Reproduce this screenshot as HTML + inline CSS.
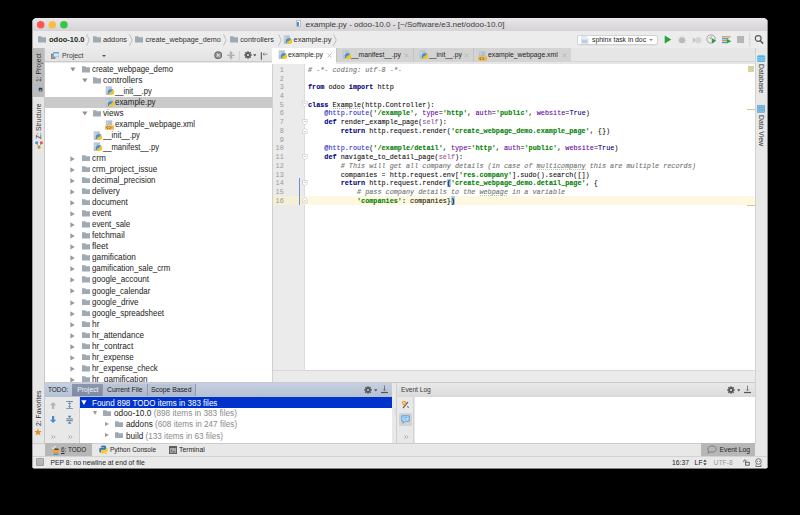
<!DOCTYPE html><html><head><meta charset="utf-8"><style>
*{margin:0;padding:0;box-sizing:border-box}
html,body{width:800px;height:515px;background:#000;overflow:hidden}
body{font-family:"Liberation Sans",sans-serif;font-size:6.8px;color:#262626;position:relative}
.a{position:absolute}
.clip{position:absolute;left:0;top:0;width:800px;height:515px;clip-path:inset(18px 32px 46px 32px round 5px 5px 4px 4px)}
.t{position:absolute;white-space:pre;line-height:10px}
.mono{font-family:"Liberation Mono",monospace}
.code{-webkit-text-stroke:0.1px currentColor}
.dot{position:absolute;width:7.6px;height:7.6px;border-radius:50%}
.fold{position:absolute;width:8px;height:5.6px;background:#9eaab4;border-radius:0.5px}
.fold:before{content:"";position:absolute;left:0;top:-1.2px;width:3.5px;height:1.6px;background:#9eaab4;border-radius:0.5px 0.5px 0 0}
.tri{position:absolute;width:0;height:0}
.tri.d{border-left:2.6px solid transparent;border-right:2.6px solid transparent;border-top:4px solid #8e8e8e}
.tri.r{border-top:2.6px solid transparent;border-bottom:2.6px solid transparent;border-left:4px solid #8e8e8e}
</style></head><body>
<div class="clip">
<div class="a" style="left:32px;top:18px;width:736px;height:451px;background:#e9e9e9"></div>
<div class="a" style="left:32px;top:18px;width:736px;height:13px;background:linear-gradient(#e8e6e8,#d5d3d5)"></div>
<div class="a" style="left:32px;top:30.6px;width:736px;height:0.8px;background:#b4b4b4"></div>
<svg class="a" style="left:32px;top:18px" width="40" height="13" viewBox="32 18 40 13"><circle cx="40.70" cy="24.8" r="3.75" fill="#fc5753"/><circle cx="52.30" cy="24.8" r="3.75" fill="#fdbc40"/><circle cx="63.90" cy="24.8" r="3.75" fill="#33c748"/></svg>
<div class="a" style="left:296px;top:20px;width:4.5px;height:7px;background:#fff;border:0.5px solid #bbb"></div>
<div class="a" style="left:297.3px;top:22px;width:1.6px;height:3.5px;background:#3b8fd6"></div>
<div class="t" style="left:305.5px;top:19.6px;font-size:8.1px;color:#3c3c3c">example.py - odoo-10.0 - [~/Software/e3.net/odoo-10.0]</div>
<div class="a" style="left:32px;top:31.4px;width:736px;height:16.6px;background:#ececec"></div>
<div class="a" style="left:32px;top:47.6px;width:736px;height:0.8px;background:#cdcdcd"></div>
<svg class="a" style="left:38.0px;top:36.3px" width="8.2" height="6.6" viewBox="0 0 8.2 6.6"><path d="M0 0.2h3.3l0.6 1h4.3v5.3h-8.2z" fill="#9eaab4"/></svg>
<div class="t" style="left:49px;top:34.6px;font-size:7.5px;font-weight:bold;color:#262626">odoo-10.0</div>
<svg class="a" style="left:86.1px;top:34px" width="4" height="12" viewBox="0 0 4 12"><path d="M0.5 0.4 L3.3 6 L0.5 11.6" fill="none" stroke="#a0a0a0" stroke-width="0.6"/></svg>
<svg class="a" style="left:93.0px;top:36.3px" width="8.2" height="6.6" viewBox="0 0 8.2 6.6"><path d="M0 0.2h3.3l0.6 1h4.3v5.3h-8.2z" fill="#9eaab4"/></svg>
<div class="t" style="left:103px;top:34.6px;font-size:7.3px;color:#303030">addons</div>
<svg class="a" style="left:129.1px;top:34px" width="4" height="12" viewBox="0 0 4 12"><path d="M0.5 0.4 L3.3 6 L0.5 11.6" fill="none" stroke="#a0a0a0" stroke-width="0.6"/></svg>
<svg class="a" style="left:135.0px;top:36.3px" width="8.2" height="6.6" viewBox="0 0 8.2 6.6"><path d="M0 0.2h3.3l0.6 1h4.3v5.3h-8.2z" fill="#9eaab4"/></svg>
<div class="t" style="left:145.6px;top:34.6px;font-size:7.2px;color:#303030">create_webpage_demo</div>
<svg class="a" style="left:222.6px;top:34px" width="4" height="12" viewBox="0 0 4 12"><path d="M0.5 0.4 L3.3 6 L0.5 11.6" fill="none" stroke="#a0a0a0" stroke-width="0.6"/></svg>
<svg class="a" style="left:229.8px;top:36.3px" width="8.2" height="6.6" viewBox="0 0 8.2 6.6"><path d="M0 0.2h3.3l0.6 1h4.3v5.3h-8.2z" fill="#9eaab4"/></svg>
<div class="t" style="left:240.2px;top:34.6px;font-size:7.3px;color:#303030">controllers</div>
<svg class="a" style="left:277.6px;top:34px" width="4" height="12" viewBox="0 0 4 12"><path d="M0.5 0.4 L3.3 6 L0.5 11.6" fill="none" stroke="#a0a0a0" stroke-width="0.6"/></svg>
<svg class="a" style="left:283.0px;top:34.8px" width="10.0" height="10.0" viewBox="0 0 10 10"><rect x="0.7" y="0.4" width="6.1" height="8.6" fill="#b5c1cc"/><path d="M1.4 2h2.4M1.4 3.4h1.6M1.4 4.8h1" stroke="#e6ebf0" stroke-width="0.6"/><g transform="translate(2.8 3.1) scale(0.93)"><path d="M0.2 3.2Q0.2 0.2 3.2 0.2H5.6V2.9H3.4Q2.8 2.9 2.8 3.5V5.4H0.2z" fill="#3d8fd6"/><path d="M6.8 3.4Q6.8 6.4 3.8 6.4H1.4V3.7H3.6Q4.2 3.7 4.2 3.1V1.2H6.8z" fill="#f6c41c"/></g></svg>
<div class="t" style="left:293.6px;top:34.6px;font-size:7.4px;color:#303030">example.py</div>
<svg class="a" style="left:333.1px;top:34px" width="4" height="12" viewBox="0 0 4 12"><path d="M0.5 0.4 L3.3 6 L0.5 11.6" fill="none" stroke="#a0a0a0" stroke-width="0.6"/></svg>
<div class="a" style="left:576.8px;top:34.6px;width:81px;height:10.4px;background:#fff;border:0.6px solid #d2d2d2;border-radius:2px;box-shadow:0 0.6px 0.6px rgba(0,0,0,.08)"></div>
<svg class="a" style="left:581.3px;top:35.8px" width="7.5" height="8" viewBox="0 0 7.5 8"><path d="M0.3 0.3h4.6l2.3 2.3v5.1h-6.9z" fill="#e8eef4" stroke="#c9d2db" stroke-width="0.5"/><rect x="0.8" y="3.6" width="5.6" height="3.4" fill="#b8d0e6"/></svg>
<div class="t" style="left:592px;top:35.2px;font-size:6.8px;color:#262626">sphinx task in doc</div>
<div class="tri d" style="left:649px;top:38.8px;border-top-color:#8a8a8a;border-left-width:2.3px;border-right-width:2.3px;border-top-width:2.8px"></div>
<svg class="a" style="left:664px;top:35px" width="8" height="9" viewBox="0 0 8 9"><path d="M0.7 0.5L7.3 4.5L0.7 8.5z" fill="#27a33c"/></svg>
<svg class="a" style="left:677px;top:34.5px" width="10" height="10" viewBox="0 0 10 10"><circle cx="5" cy="5.2" r="3" fill="#b9b9b9"/><path d="M1 3l1.5 1M9 3l-1.5 1M0.7 5.5h1.5M9.3 5.5h-1.5M1 8l1.5-1M9 8l-1.5-1M3.5 1.2l0.7 1.2M6.5 1.2l-0.7 1.2" stroke="#c4c4c4" stroke-width="0.6"/></svg>
<svg class="a" style="left:692px;top:34.5px" width="10" height="10" viewBox="0 0 10 10"><path d="M0.8 2.5L5 5.2L0.8 8z" fill="#c6c6c6"/><circle cx="6.3" cy="5.2" r="3.1" fill="#d4d4d4"/></svg>
<svg class="a" style="left:706px;top:34.3px" width="11" height="10" viewBox="0 0 11 10"><circle cx="5" cy="5" r="4.1" fill="none" stroke="#8a8a8a" stroke-width="0.7"/><path d="M3.2 3.5l2 1.5M5.2 2v3" stroke="#888" stroke-width="0.6"/><path d="M5.8 4.2L10.2 6.8L5.8 9.4z" fill="#27a33c"/></svg>
<svg class="a" style="left:721.5px;top:35.6px" width="10" height="8" viewBox="0 0 10 8"><rect x="0" y="0.2" width="8.5" height="1.3" fill="#c99a5c"/><rect x="0" y="2.1" width="6.5" height="1.3" fill="#5d94c8"/><rect x="0" y="4.0" width="5" height="1.3" fill="#c99a5c"/><rect x="0" y="5.9" width="5" height="1.3" fill="#5d94c8"/><path d="M4.8 3L9.4 5.3L4.8 7.6z" fill="#27a33c"/></svg>
<div class="a" style="left:737.2px;top:36.1px;width:6.5px;height:6.6px;background:#b6b6b6"></div>
<svg class="a" style="left:749.2px;top:33px" width="1.6" height="14" viewBox="0 0 1.6 14"><path d="M0.8 0.3V13.7" stroke="#a8a8a8" stroke-width="0.8" stroke-dasharray="0.9 1.1"/></svg>
<svg class="a" style="left:753.6px;top:34.4px" width="10" height="10" viewBox="0 0 10 10"><circle cx="4.2" cy="4.5" r="2.9" fill="none" stroke="#5a5a5a" stroke-width="1.15"/><path d="M6.3 6.7L8.7 9.1" stroke="#5a5a5a" stroke-width="1.5" stroke-linecap="round"/></svg>
<div class="a" style="left:32px;top:48.4px;width:12.5px;height:394.5px;background:#e6e6e6;border-right:0.6px solid #c8c8c8"></div>
<div class="a" style="left:32.7px;top:48.4px;width:11.4px;height:49.1px;background:#bcbcbc"></div>
<div class="t" style="left:33.6px;top:82.2px;font-size:6.8px;color:#2c2c2c;transform-origin:0 0;transform:rotate(-90deg)">1: Project</div>
<svg class="a" style="left:35.2px;top:84.4px" width="7.5" height="7.5" viewBox="0 0 7.5 7.5"><path d="M0.2 0.3h2.6l0.5 0.9h3.3v4.3h-6.4z" fill="#a9bccd"/><rect x="3.8" y="3.8" width="3.5" height="3.5" fill="#333"/><rect x="4.6" y="5.6" width="1.9" height="1" fill="#ddd"/></svg>
<div class="t" style="left:33.5px;top:138.5px;font-size:6.8px;color:#2c2c2c;transform-origin:0 0;transform:rotate(-90deg)">Z: Structure</div>
<svg class="a" style="left:34.6px;top:140.8px" width="8" height="8" viewBox="0 0 8 8"><path d="M1.6 1.8L4 5.8L6.4 1.8" stroke="#777" stroke-width="0.7" fill="none"/><circle cx="1.6" cy="1.8" r="1.5" fill="#4a90d9"/><circle cx="6.4" cy="1.8" r="1.5" fill="#e05252"/><circle cx="4" cy="6.2" r="1.5" fill="#d9902a"/><circle cx="4" cy="3.6" r="0.8" fill="#fff"/></svg>
<div class="t" style="left:33.6px;top:426.0px;font-size:6.8px;color:#2c2c2c;transform-origin:0 0;transform:rotate(-90deg)">2: Favorites</div>
<svg class="a" style="left:34px;top:428px" width="8" height="8" viewBox="0 0 10 10"><path d="M5 0.3L6.3 3.6L9.8 3.8L7.1 6L8 9.5L5 7.5L2 9.5L2.9 6L0.2 3.8L3.7 3.6z" fill="#e0902a"/></svg>
<div class="a" style="left:755px;top:48.4px;width:13px;height:408px;background:#e8e8e8;border-left:0.6px solid #d2d2d2"></div>
<svg class="a" style="left:757.3px;top:54.8px" width="8.4" height="7.4" viewBox="0 0 8.4 7.4"><rect x="0.2" y="0.2" width="8" height="7" rx="2.2" ry="1.4" fill="#55b4e6"/><path d="M0.4 2.6q3.8 1 7.6 0M0.4 4.8q3.8 1 7.6 0" stroke="#bfe3f6" stroke-width="0.6" fill="none"/></svg>
<div class="t" style="left:766.0px;top:64.0px;font-size:6.8px;color:#2c2c2c;transform-origin:0 0;transform:rotate(90deg)">Database</div>
<svg class="a" style="left:757px;top:105.2px" width="8" height="7.6" viewBox="0 0 8 7.6"><rect x="0.3" y="0.3" width="7.4" height="7" fill="#86c4ec" stroke="#5d9dcc" stroke-width="0.6"/><path d="M0.3 2.6h7.4M0.3 4.9h7.4M2.8 0.3v7M5.2 0.3v7" stroke="#5d9dcc" stroke-width="0.5"/></svg>
<div class="t" style="left:766.0px;top:115.0px;font-size:6.8px;color:#2c2c2c;transform-origin:0 0;transform:rotate(90deg)">Data View</div>
<div class="a" style="left:44.6px;top:48.4px;width:227.4px;height:14px;background:linear-gradient(#ebebeb,#e3e3e3);border-bottom:0.7px solid #cacaca"></div>
<div class="a" style="left:44.6px;top:62.5px;width:227.4px;height:320.5px;background:#fff"></div>
<svg class="a" style="left:50.8px;top:51.6px" width="8.2" height="7.2" viewBox="0 0 8.2 7.2"><rect x="0.4" y="2" width="3.6" height="5" fill="#9a9a9a" stroke="#666" stroke-width="0.6"/><rect x="2.6" y="0.3" width="5.4" height="4.6" fill="#d6e8f6" stroke="#6d9ecb" stroke-width="0.5"/><rect x="2.6" y="0.3" width="5.4" height="1.1" fill="#5b9bd5"/></svg>
<div class="t" style="left:62px;top:51.2px;font-size:6.9px;color:#3a3a3a">Project</div>
<div class="tri d" style="left:101.8px;top:54.8px;border-top-color:#555;border-left-width:2.2px;border-right-width:2.2px;border-top-width:2.6px"></div>
<svg class="a" style="left:214px;top:51.3px" width="8.4" height="8.4" viewBox="0 0 8.4 8.4"><circle cx="4.2" cy="4.2" r="3.9" fill="#6f6f6f"/><circle cx="4.2" cy="4.2" r="2.7" fill="#9a9a9a"/><path d="M2.8 2.8l2.8 2.8M5.6 2.8l-2.8 2.8" stroke="#f0f0f0" stroke-width="0.9"/></svg>
<svg class="a" style="left:226.5px;top:51px" width="8" height="8.5" viewBox="0 0 8 8.5"><path d="M0.3 4.25h7.4" stroke="#8c8c8c" stroke-width="0.8"/><path d="M4 0.2v2.6M4 8.3v-2.6" stroke="#8c8c8c" stroke-width="0.9"/><path d="M2.6 1.8L4 3.4L5.4 1.8M2.6 6.7L4 5.1L5.4 6.7" fill="none" stroke="#8c8c8c" stroke-width="0.8"/></svg>
<div class="a" style="left:239.3px;top:51px;width:0.6px;height:9px;background:#d0d0d0"></div>
<svg class="a" style="left:244.0px;top:51.3px" width="8" height="8" viewBox="0 0 8 8"><g fill="#5a5a5a"><rect x="3.3" y="0.2" width="1.4" height="7.6"/><rect x="0.2" y="3.3" width="7.6" height="1.4"/><rect x="3.3" y="0.2" width="1.4" height="7.6" transform="rotate(45 4 4)"/><rect x="3.3" y="0.2" width="1.4" height="7.6" transform="rotate(-45 4 4)"/><circle cx="4" cy="4" r="2.7"/></g><circle cx="4" cy="4" r="1.1" fill="#e8e8e8"/></svg>
<svg class="a" style="left:252.6px;top:54.4px" width="3.6" height="2.8" viewBox="0 0 3.6 2.8"><path d="M0 0.2H3.6L1.8 2.6z" fill="#555"/></svg>
<svg class="a" style="left:260px;top:51.5px" width="8" height="8" viewBox="0 0 8 8"><path d="M1.4 0.3v7.4" stroke="#6a6a6a" stroke-width="1.3"/><path d="M3 2.2h4.6M3 2.2l1.4-1.2M3 2.2l1.4 1.2" stroke="#6a6a6a" stroke-width="0.7" fill="none"/></svg>
<div class="a" style="left:44.6px;top:97px;width:227.4px;height:10.8px;background:#cacaca"></div>
<svg class="a" style="left:69.9px;top:67.0px" width="6" height="5" viewBox="0 0 6 5"><path d="M0.3 0.4H5.5L2.9 4.6z" fill="#8f8f8f"/></svg>
<svg class="a" style="left:81.5px;top:66.0px" width="8.2" height="6.6" viewBox="0 0 8.2 6.6"><path d="M0 0.2h3.3l0.6 1h4.3v5.3h-8.2z" fill="#9eaab4"/></svg>
<div class="t" style="left:91.7px;top:65.0px;font-size:8.2px;color:#222;transform-origin:0 50%;transform:scaleX(0.9466)">create_webpage_demo</div>
<svg class="a" style="left:81.6px;top:78.1px" width="6" height="5" viewBox="0 0 6 5"><path d="M0.3 0.4H5.5L2.9 4.6z" fill="#8f8f8f"/></svg>
<svg class="a" style="left:93.2px;top:77.1px" width="8.2" height="6.6" viewBox="0 0 8.2 6.6"><path d="M0 0.2h3.3l0.6 1h4.3v5.3h-8.2z" fill="#9eaab4"/></svg>
<div class="t" style="left:103.4px;top:76.1px;font-size:8.2px;color:#222;transform-origin:0 50%;transform:scaleX(1.0453)">controllers</div>
<svg class="a" style="left:104.8px;top:86.4px" width="10.0" height="10.0" viewBox="0 0 10 10"><rect x="0.7" y="0.4" width="6.1" height="8.6" fill="#b5c1cc"/><path d="M1.4 2h2.4M1.4 3.4h1.6M1.4 4.8h1" stroke="#e6ebf0" stroke-width="0.6"/><g transform="translate(2.8 3.1) scale(0.93)"><path d="M0.2 3.2Q0.2 0.2 3.2 0.2H5.6V2.9H3.4Q2.8 2.9 2.8 3.5V5.4H0.2z" fill="#3d8fd6"/><path d="M6.8 3.4Q6.8 6.4 3.8 6.4H1.4V3.7H3.6Q4.2 3.7 4.2 3.1V1.2H6.8z" fill="#f6c41c"/></g></svg>
<div class="t" style="left:115.1px;top:87.1px;font-size:8.2px;color:#222;transform-origin:0 50%;transform:scaleX(0.9272)">__init__.py</div>
<svg class="a" style="left:104.8px;top:97.5px" width="10.0" height="10.0" viewBox="0 0 10 10"><rect x="0.7" y="0.4" width="6.1" height="8.6" fill="#b5c1cc"/><path d="M1.4 2h2.4M1.4 3.4h1.6M1.4 4.8h1" stroke="#e6ebf0" stroke-width="0.6"/><g transform="translate(2.8 3.1) scale(0.93)"><path d="M0.2 3.2Q0.2 0.2 3.2 0.2H5.6V2.9H3.4Q2.8 2.9 2.8 3.5V5.4H0.2z" fill="#3d8fd6"/><path d="M6.8 3.4Q6.8 6.4 3.8 6.4H1.4V3.7H3.6Q4.2 3.7 4.2 3.1V1.2H6.8z" fill="#f6c41c"/></g></svg>
<div class="t" style="left:115.1px;top:98.2px;font-size:8.2px;color:#222;transform-origin:0 50%;transform:scaleX(0.9681)">example.py</div>
<svg class="a" style="left:81.6px;top:111.3px" width="6" height="5" viewBox="0 0 6 5"><path d="M0.3 0.4H5.5L2.9 4.6z" fill="#8f8f8f"/></svg>
<svg class="a" style="left:93.2px;top:110.3px" width="8.2" height="6.6" viewBox="0 0 8.2 6.6"><path d="M0 0.2h3.3l0.6 1h4.3v5.3h-8.2z" fill="#9eaab4"/></svg>
<div class="t" style="left:103.4px;top:109.3px;font-size:8.2px;color:#222;transform-origin:0 50%;transform:scaleX(1.0066)">views</div>
<svg class="a" style="left:104.8px;top:119.7px" width="9.4" height="10" viewBox="0 0 9.4 10"><rect x="0.9" y="0.4" width="6.4" height="5" fill="#b3bfca"/><path d="M1.6 2h2.2M1.6 3.4h1.4" stroke="#e4e9ee" stroke-width="0.6"/><rect x="0.2" y="5.4" width="8.8" height="4.4" fill="#f1b74a"/><path d="M3 6.3l-1.2 1.3 1.2 1.3M4.6 6.3l1.2 1.3-1.2 1.3" fill="none" stroke="#6b4a12" stroke-width="0.8"/></svg>
<div class="t" style="left:115.1px;top:120.4px;font-size:8.2px;color:#222;transform-origin:0 50%;transform:scaleX(0.9566)">example_webpage.xml</div>
<svg class="a" style="left:93.1px;top:130.7px" width="10.0" height="10.0" viewBox="0 0 10 10"><rect x="0.7" y="0.4" width="6.1" height="8.6" fill="#b5c1cc"/><path d="M1.4 2h2.4M1.4 3.4h1.6M1.4 4.8h1" stroke="#e6ebf0" stroke-width="0.6"/><g transform="translate(2.8 3.1) scale(0.93)"><path d="M0.2 3.2Q0.2 0.2 3.2 0.2H5.6V2.9H3.4Q2.8 2.9 2.8 3.5V5.4H0.2z" fill="#3d8fd6"/><path d="M6.8 3.4Q6.8 6.4 3.8 6.4H1.4V3.7H3.6Q4.2 3.7 4.2 3.1V1.2H6.8z" fill="#f6c41c"/></g></svg>
<div class="t" style="left:103.4px;top:131.4px;font-size:8.2px;color:#222;transform-origin:0 50%;transform:scaleX(0.9322)">__init__.py</div>
<svg class="a" style="left:93.1px;top:141.8px" width="10.0" height="10.0" viewBox="0 0 10 10"><rect x="0.7" y="0.4" width="6.1" height="8.6" fill="#b5c1cc"/><path d="M1.4 2h2.4M1.4 3.4h1.6M1.4 4.8h1" stroke="#e6ebf0" stroke-width="0.6"/><g transform="translate(2.8 3.1) scale(0.93)"><path d="M0.2 3.2Q0.2 0.2 3.2 0.2H5.6V2.9H3.4Q2.8 2.9 2.8 3.5V5.4H0.2z" fill="#3d8fd6"/><path d="M6.8 3.4Q6.8 6.4 3.8 6.4H1.4V3.7H3.6Q4.2 3.7 4.2 3.1V1.2H6.8z" fill="#f6c41c"/></g></svg>
<div class="t" style="left:103.4px;top:142.5px;font-size:8.2px;color:#222;transform-origin:0 50%;transform:scaleX(0.9327)">__manifest__.py</div>
<svg class="a" style="left:70.3px;top:155.5px" width="6" height="6" viewBox="0 0 6 6"><path d="M0.4 0.3V5.5L4.7 2.9z" fill="#999"/></svg>
<svg class="a" style="left:81.5px;top:154.6px" width="8.2" height="6.6" viewBox="0 0 8.2 6.6"><path d="M0 0.2h3.3l0.6 1h4.3v5.3h-8.2z" fill="#9eaab4"/></svg>
<div class="t" style="left:91.7px;top:153.6px;font-size:8.2px;color:#222;transform-origin:0 50%;transform:scaleX(1.0102)">crm</div>
<svg class="a" style="left:70.3px;top:166.6px" width="6" height="6" viewBox="0 0 6 6"><path d="M0.4 0.3V5.5L4.7 2.9z" fill="#999"/></svg>
<svg class="a" style="left:81.5px;top:165.7px" width="8.2" height="6.6" viewBox="0 0 8.2 6.6"><path d="M0 0.2h3.3l0.6 1h4.3v5.3h-8.2z" fill="#9eaab4"/></svg>
<div class="t" style="left:91.7px;top:164.7px;font-size:8.2px;color:#222;transform-origin:0 50%;transform:scaleX(0.9815)">crm_project_issue</div>
<svg class="a" style="left:70.3px;top:177.6px" width="6" height="6" viewBox="0 0 6 6"><path d="M0.4 0.3V5.5L4.7 2.9z" fill="#999"/></svg>
<svg class="a" style="left:81.5px;top:176.7px" width="8.2" height="6.6" viewBox="0 0 8.2 6.6"><path d="M0 0.2h3.3l0.6 1h4.3v5.3h-8.2z" fill="#9eaab4"/></svg>
<div class="t" style="left:91.7px;top:175.7px;font-size:8.2px;color:#222;transform-origin:0 50%;transform:scaleX(0.9693)">decimal_precision</div>
<svg class="a" style="left:70.3px;top:188.7px" width="6" height="6" viewBox="0 0 6 6"><path d="M0.4 0.3V5.5L4.7 2.9z" fill="#999"/></svg>
<svg class="a" style="left:81.5px;top:187.8px" width="8.2" height="6.6" viewBox="0 0 8.2 6.6"><path d="M0 0.2h3.3l0.6 1h4.3v5.3h-8.2z" fill="#9eaab4"/></svg>
<div class="t" style="left:91.7px;top:186.8px;font-size:8.2px;color:#222;transform-origin:0 50%;transform:scaleX(0.9851)">delivery</div>
<svg class="a" style="left:70.3px;top:199.8px" width="6" height="6" viewBox="0 0 6 6"><path d="M0.4 0.3V5.5L4.7 2.9z" fill="#999"/></svg>
<svg class="a" style="left:81.5px;top:198.9px" width="8.2" height="6.6" viewBox="0 0 8.2 6.6"><path d="M0 0.2h3.3l0.6 1h4.3v5.3h-8.2z" fill="#9eaab4"/></svg>
<div class="t" style="left:91.7px;top:197.9px;font-size:8.2px;color:#222;transform-origin:0 50%;transform:scaleX(0.9965)">document</div>
<svg class="a" style="left:70.3px;top:210.9px" width="6" height="6" viewBox="0 0 6 6"><path d="M0.4 0.3V5.5L4.7 2.9z" fill="#999"/></svg>
<svg class="a" style="left:81.5px;top:210.0px" width="8.2" height="6.6" viewBox="0 0 8.2 6.6"><path d="M0 0.2h3.3l0.6 1h4.3v5.3h-8.2z" fill="#9eaab4"/></svg>
<div class="t" style="left:91.7px;top:209.0px;font-size:8.2px;color:#222;transform-origin:0 50%;transform:scaleX(0.9642)">event</div>
<svg class="a" style="left:70.3px;top:221.9px" width="6" height="6" viewBox="0 0 6 6"><path d="M0.4 0.3V5.5L4.7 2.9z" fill="#999"/></svg>
<svg class="a" style="left:81.5px;top:221.0px" width="8.2" height="6.6" viewBox="0 0 8.2 6.6"><path d="M0 0.2h3.3l0.6 1h4.3v5.3h-8.2z" fill="#9eaab4"/></svg>
<div class="t" style="left:91.7px;top:220.0px;font-size:8.2px;color:#222;transform-origin:0 50%;transform:scaleX(0.9634)">event_sale</div>
<svg class="a" style="left:70.3px;top:233.0px" width="6" height="6" viewBox="0 0 6 6"><path d="M0.4 0.3V5.5L4.7 2.9z" fill="#999"/></svg>
<svg class="a" style="left:81.5px;top:232.1px" width="8.2" height="6.6" viewBox="0 0 8.2 6.6"><path d="M0 0.2h3.3l0.6 1h4.3v5.3h-8.2z" fill="#9eaab4"/></svg>
<div class="t" style="left:91.7px;top:231.1px;font-size:8.2px;color:#222;transform-origin:0 50%;transform:scaleX(1.0008)">fetchmail</div>
<svg class="a" style="left:70.3px;top:244.1px" width="6" height="6" viewBox="0 0 6 6"><path d="M0.4 0.3V5.5L4.7 2.9z" fill="#999"/></svg>
<svg class="a" style="left:81.5px;top:243.2px" width="8.2" height="6.6" viewBox="0 0 8.2 6.6"><path d="M0 0.2h3.3l0.6 1h4.3v5.3h-8.2z" fill="#9eaab4"/></svg>
<div class="t" style="left:91.7px;top:242.2px;font-size:8.2px;color:#222;transform-origin:0 50%;transform:scaleX(1.0431)">fleet</div>
<svg class="a" style="left:70.3px;top:255.2px" width="6" height="6" viewBox="0 0 6 6"><path d="M0.4 0.3V5.5L4.7 2.9z" fill="#999"/></svg>
<svg class="a" style="left:81.5px;top:254.3px" width="8.2" height="6.6" viewBox="0 0 8.2 6.6"><path d="M0 0.2h3.3l0.6 1h4.3v5.3h-8.2z" fill="#9eaab4"/></svg>
<div class="t" style="left:91.7px;top:253.3px;font-size:8.2px;color:#222;transform-origin:0 50%;transform:scaleX(1.0047)">gamification</div>
<svg class="a" style="left:70.3px;top:266.2px" width="6" height="6" viewBox="0 0 6 6"><path d="M0.4 0.3V5.5L4.7 2.9z" fill="#999"/></svg>
<svg class="a" style="left:81.5px;top:265.3px" width="8.2" height="6.6" viewBox="0 0 8.2 6.6"><path d="M0 0.2h3.3l0.6 1h4.3v5.3h-8.2z" fill="#9eaab4"/></svg>
<div class="t" style="left:91.7px;top:264.3px;font-size:8.2px;color:#222;transform-origin:0 50%;transform:scaleX(0.9606)">gamification_sale_crm</div>
<svg class="a" style="left:70.3px;top:277.3px" width="6" height="6" viewBox="0 0 6 6"><path d="M0.4 0.3V5.5L4.7 2.9z" fill="#999"/></svg>
<svg class="a" style="left:81.5px;top:276.4px" width="8.2" height="6.6" viewBox="0 0 8.2 6.6"><path d="M0 0.2h3.3l0.6 1h4.3v5.3h-8.2z" fill="#9eaab4"/></svg>
<div class="t" style="left:91.7px;top:275.4px;font-size:8.2px;color:#222;transform-origin:0 50%;transform:scaleX(0.9838)">google_account</div>
<svg class="a" style="left:70.3px;top:288.4px" width="6" height="6" viewBox="0 0 6 6"><path d="M0.4 0.3V5.5L4.7 2.9z" fill="#999"/></svg>
<svg class="a" style="left:81.5px;top:287.5px" width="8.2" height="6.6" viewBox="0 0 8.2 6.6"><path d="M0 0.2h3.3l0.6 1h4.3v5.3h-8.2z" fill="#9eaab4"/></svg>
<div class="t" style="left:91.7px;top:286.5px;font-size:8.2px;color:#222;transform-origin:0 50%;transform:scaleX(0.9630)">google_calendar</div>
<svg class="a" style="left:70.3px;top:299.5px" width="6" height="6" viewBox="0 0 6 6"><path d="M0.4 0.3V5.5L4.7 2.9z" fill="#999"/></svg>
<svg class="a" style="left:81.5px;top:298.6px" width="8.2" height="6.6" viewBox="0 0 8.2 6.6"><path d="M0 0.2h3.3l0.6 1h4.3v5.3h-8.2z" fill="#9eaab4"/></svg>
<div class="t" style="left:91.7px;top:297.6px;font-size:8.2px;color:#222;transform-origin:0 50%;transform:scaleX(0.9935)">google_drive</div>
<svg class="a" style="left:70.3px;top:310.5px" width="6" height="6" viewBox="0 0 6 6"><path d="M0.4 0.3V5.5L4.7 2.9z" fill="#999"/></svg>
<svg class="a" style="left:81.5px;top:309.6px" width="8.2" height="6.6" viewBox="0 0 8.2 6.6"><path d="M0 0.2h3.3l0.6 1h4.3v5.3h-8.2z" fill="#9eaab4"/></svg>
<div class="t" style="left:91.7px;top:308.6px;font-size:8.2px;color:#222;transform-origin:0 50%;transform:scaleX(0.9710)">google_spreadsheet</div>
<svg class="a" style="left:70.3px;top:321.6px" width="6" height="6" viewBox="0 0 6 6"><path d="M0.4 0.3V5.5L4.7 2.9z" fill="#999"/></svg>
<svg class="a" style="left:81.5px;top:320.7px" width="8.2" height="6.6" viewBox="0 0 8.2 6.6"><path d="M0 0.2h3.3l0.6 1h4.3v5.3h-8.2z" fill="#9eaab4"/></svg>
<div class="t" style="left:91.7px;top:319.7px;font-size:8.2px;color:#222;transform-origin:0 50%;transform:scaleX(1.0265)">hr</div>
<svg class="a" style="left:70.3px;top:332.7px" width="6" height="6" viewBox="0 0 6 6"><path d="M0.4 0.3V5.5L4.7 2.9z" fill="#999"/></svg>
<svg class="a" style="left:81.5px;top:331.8px" width="8.2" height="6.6" viewBox="0 0 8.2 6.6"><path d="M0 0.2h3.3l0.6 1h4.3v5.3h-8.2z" fill="#9eaab4"/></svg>
<div class="t" style="left:91.7px;top:330.8px;font-size:8.2px;color:#222;transform-origin:0 50%;transform:scaleX(0.9941)">hr_attendance</div>
<svg class="a" style="left:70.3px;top:343.8px" width="6" height="6" viewBox="0 0 6 6"><path d="M0.4 0.3V5.5L4.7 2.9z" fill="#999"/></svg>
<svg class="a" style="left:81.5px;top:342.9px" width="8.2" height="6.6" viewBox="0 0 8.2 6.6"><path d="M0 0.2h3.3l0.6 1h4.3v5.3h-8.2z" fill="#9eaab4"/></svg>
<div class="t" style="left:91.7px;top:341.9px;font-size:8.2px;color:#222;transform-origin:0 50%;transform:scaleX(1.0079)">hr_contract</div>
<svg class="a" style="left:70.3px;top:354.8px" width="6" height="6" viewBox="0 0 6 6"><path d="M0.4 0.3V5.5L4.7 2.9z" fill="#999"/></svg>
<svg class="a" style="left:81.5px;top:353.9px" width="8.2" height="6.6" viewBox="0 0 8.2 6.6"><path d="M0 0.2h3.3l0.6 1h4.3v5.3h-8.2z" fill="#9eaab4"/></svg>
<div class="t" style="left:91.7px;top:352.9px;font-size:8.2px;color:#222;transform-origin:0 50%;transform:scaleX(0.9775)">hr_expense</div>
<svg class="a" style="left:70.3px;top:365.9px" width="6" height="6" viewBox="0 0 6 6"><path d="M0.4 0.3V5.5L4.7 2.9z" fill="#999"/></svg>
<svg class="a" style="left:81.5px;top:365.0px" width="8.2" height="6.6" viewBox="0 0 8.2 6.6"><path d="M0 0.2h3.3l0.6 1h4.3v5.3h-8.2z" fill="#9eaab4"/></svg>
<div class="t" style="left:91.7px;top:364.0px;font-size:8.2px;color:#222;transform-origin:0 50%;transform:scaleX(0.9572)">hr_expense_check</div>
<svg class="a" style="left:70.3px;top:377.0px" width="6" height="6" viewBox="0 0 6 6"><path d="M0.4 0.3V5.5L4.7 2.9z" fill="#999"/></svg>
<svg class="a" style="left:81.5px;top:376.1px" width="8.2" height="6.6" viewBox="0 0 8.2 6.6"><path d="M0 0.2h3.3l0.6 1h4.3v5.3h-8.2z" fill="#9eaab4"/></svg>
<div class="t" style="left:91.7px;top:375.1px;font-size:8.2px;color:#222;transform-origin:0 50%;transform:scaleX(0.9997)">hr_gamification</div>
<div class="a" style="left:272px;top:48.4px;width:483px;height:16px;background:#e6e6e6"></div>
<div class="a" style="left:272px;top:63.9px;width:483px;height:0.8px;background:#d2d2d2"></div>
<div class="a" style="left:570.8px;top:61.2px;width:184.2px;height:0.7px;background:#d6d6d6"></div>
<div class="a" style="left:272.2px;top:48.4px;width:63.5px;height:15.2px;background:#fff"></div>
<svg class="a" style="left:278.0px;top:50.4px" width="10.0" height="10.0" viewBox="0 0 10 10"><rect x="0.7" y="0.4" width="6.1" height="8.6" fill="#b5c1cc"/><path d="M1.4 2h2.4M1.4 3.4h1.6M1.4 4.8h1" stroke="#e6ebf0" stroke-width="0.6"/><g transform="translate(2.8 3.1) scale(0.93)"><path d="M0.2 3.2Q0.2 0.2 3.2 0.2H5.6V2.9H3.4Q2.8 2.9 2.8 3.5V5.4H0.2z" fill="#3d8fd6"/><path d="M6.8 3.4Q6.8 6.4 3.8 6.4H1.4V3.7H3.6Q4.2 3.7 4.2 3.1V1.2H6.8z" fill="#f6c41c"/></g></svg>
<div class="t" style="left:287.8px;top:50.4px;font-size:7.1px;color:#222;transform-origin:0 50%;transform:scaleX(0.96)">example.py</div>
<svg class="a" style="left:326.6px;top:52.9px" width="5" height="5" viewBox="0 0 5 5"><path d="M0.6 0.6L4.4 4.4M4.4 0.6L0.6 4.4" stroke="#a9a9a9" stroke-width="0.7"/></svg>
<div class="a" style="left:335.7px;top:48.4px;width:77.6px;height:13.3px;background:#d3d3d3;border-left:0.6px solid #c4c4c4"></div>
<svg class="a" style="left:341.5px;top:50.4px" width="10.0" height="10.0" viewBox="0 0 10 10"><rect x="0.7" y="0.4" width="6.1" height="8.6" fill="#b5c1cc"/><path d="M1.4 2h2.4M1.4 3.4h1.6M1.4 4.8h1" stroke="#e6ebf0" stroke-width="0.6"/><g transform="translate(2.8 3.1) scale(0.93)"><path d="M0.2 3.2Q0.2 0.2 3.2 0.2H5.6V2.9H3.4Q2.8 2.9 2.8 3.5V5.4H0.2z" fill="#3d8fd6"/><path d="M6.8 3.4Q6.8 6.4 3.8 6.4H1.4V3.7H3.6Q4.2 3.7 4.2 3.1V1.2H6.8z" fill="#f6c41c"/></g></svg>
<div class="t" style="left:351.3px;top:50.4px;font-size:7.1px;color:#222;transform-origin:0 50%;transform:scaleX(0.96)">__manifest__.py</div>
<svg class="a" style="left:404.2px;top:52.9px" width="5" height="5" viewBox="0 0 5 5"><path d="M0.6 0.6L4.4 4.4M4.4 0.6L0.6 4.4" stroke="#a9a9a9" stroke-width="0.7"/></svg>
<div class="a" style="left:413.3px;top:48.4px;width:59.5px;height:13.3px;background:#d3d3d3;border-left:0.6px solid #c4c4c4"></div>
<svg class="a" style="left:419.1px;top:50.4px" width="10.0" height="10.0" viewBox="0 0 10 10"><rect x="0.7" y="0.4" width="6.1" height="8.6" fill="#b5c1cc"/><path d="M1.4 2h2.4M1.4 3.4h1.6M1.4 4.8h1" stroke="#e6ebf0" stroke-width="0.6"/><g transform="translate(2.8 3.1) scale(0.93)"><path d="M0.2 3.2Q0.2 0.2 3.2 0.2H5.6V2.9H3.4Q2.8 2.9 2.8 3.5V5.4H0.2z" fill="#3d8fd6"/><path d="M6.8 3.4Q6.8 6.4 3.8 6.4H1.4V3.7H3.6Q4.2 3.7 4.2 3.1V1.2H6.8z" fill="#f6c41c"/></g></svg>
<div class="t" style="left:428.9px;top:50.4px;font-size:7.1px;color:#222;transform-origin:0 50%;transform:scaleX(0.96)">__init__.py</div>
<svg class="a" style="left:463.7px;top:52.9px" width="5" height="5" viewBox="0 0 5 5"><path d="M0.6 0.6L4.4 4.4M4.4 0.6L0.6 4.4" stroke="#a9a9a9" stroke-width="0.7"/></svg>
<div class="a" style="left:472.8px;top:48.4px;width:98.0px;height:13.3px;background:#d3d3d3;border-left:0.6px solid #c4c4c4"></div>
<svg class="a" style="left:478.3px;top:50.6px" width="9.4" height="10" viewBox="0 0 9.4 10"><rect x="0.9" y="0.4" width="6.4" height="5" fill="#b3bfca"/><path d="M1.6 2h2.2M1.6 3.4h1.4" stroke="#e4e9ee" stroke-width="0.6"/><rect x="0.2" y="5.4" width="8.8" height="4.4" fill="#f1b74a"/><path d="M3 6.3l-1.2 1.3 1.2 1.3M4.6 6.3l1.2 1.3-1.2 1.3" fill="none" stroke="#6b4a12" stroke-width="0.8"/></svg>
<div class="t" style="left:488.4px;top:50.4px;font-size:7.1px;color:#222;transform-origin:0 50%;transform:scaleX(0.96)">example_webpage.xml</div>
<svg class="a" style="left:561.7px;top:52.9px" width="5" height="5" viewBox="0 0 5 5"><path d="M0.6 0.6L4.4 4.4M4.4 0.6L0.6 4.4" stroke="#a9a9a9" stroke-width="0.7"/></svg>
<div class="a" style="left:272px;top:64.2px;width:483px;height:318.8px;background:#ebebeb"></div>
<div class="a" style="left:304.8px;top:64.2px;width:450.2px;height:306px;background:#fff"></div>
<div class="a" style="left:272px;top:64.2px;width:0.7px;height:319px;background:#d0d0d0"></div>
<div class="a" style="left:304.3px;top:64.2px;width:0.6px;height:306px;background:#dcdcdc"></div>
<div class="a" style="left:272.7px;top:369.8px;width:482.3px;height:0.7px;background:#d8d8d8"></div>
<div class="a" style="left:304.8px;top:196.09px;width:450.2px;height:8.73px;background:#fdf8df"></div>
<div class="a" style="left:272.7px;top:196.09px;width:32.1px;height:8.73px;background:#f5efd5"></div>
<div class="a" style="left:446.97px;top:178.82px;width:4.08px;height:8.33px;background:#9fcbf5"></div>
<div class="a" style="left:451.05px;top:196.28px;width:4.08px;height:8.33px;background:#9fcbf5"></div>
<div class="t mono" style="left:262px;width:21.8px;text-align:right;top:65.80px;font-size:7.5px;line-height:8px;color:#999;transform-origin:100% 50%;transform:scaleX(0.907)">1</div>
<div class="t mono code" style="left:308.2px;top:65.80px;font-size:7.5px;line-height:8px;color:#101010;transform-origin:0 50%;transform:scaleX(0.907)"><span style="color:#727272;font-style:italic"># -*- coding: utf-8 -*-</span></div>
<div class="t mono" style="left:262px;width:21.8px;text-align:right;top:74.53px;font-size:7.5px;line-height:8px;color:#999;transform-origin:100% 50%;transform:scaleX(0.907)">2</div>
<div class="t mono code" style="left:308.2px;top:74.53px;font-size:7.5px;line-height:8px;color:#101010;transform-origin:0 50%;transform:scaleX(0.907)"></div>
<div class="t mono" style="left:262px;width:21.8px;text-align:right;top:83.26px;font-size:7.5px;line-height:8px;color:#999;transform-origin:100% 50%;transform:scaleX(0.907)">3</div>
<div class="t mono code" style="left:308.2px;top:83.26px;font-size:7.5px;line-height:8px;color:#101010;transform-origin:0 50%;transform:scaleX(0.907)"><span style="color:#000080;font-weight:bold">from</span> odoo <span style="color:#000080;font-weight:bold">import</span> http</div>
<div class="t mono" style="left:262px;width:21.8px;text-align:right;top:91.99px;font-size:7.5px;line-height:8px;color:#999;transform-origin:100% 50%;transform:scaleX(0.907)">4</div>
<div class="t mono code" style="left:308.2px;top:91.99px;font-size:7.5px;line-height:8px;color:#101010;transform-origin:0 50%;transform:scaleX(0.907)"></div>
<div class="t mono" style="left:262px;width:21.8px;text-align:right;top:100.72px;font-size:7.5px;line-height:8px;color:#999;transform-origin:100% 50%;transform:scaleX(0.907)">5</div>
<div class="t mono code" style="left:308.2px;top:100.72px;font-size:7.5px;line-height:8px;color:#101010;transform-origin:0 50%;transform:scaleX(0.907)"><span style="color:#000080;font-weight:bold">class</span> Example(http.Controller):</div>
<div class="t mono" style="left:262px;width:21.8px;text-align:right;top:109.45px;font-size:7.5px;line-height:8px;color:#999;transform-origin:100% 50%;transform:scaleX(0.907)">6</div>
<div class="t mono code" style="left:308.2px;top:109.45px;font-size:7.5px;line-height:8px;color:#101010;transform-origin:0 50%;transform:scaleX(0.907)">    <span style="color:#2f2fc8">@http.route</span>(<span style="color:#008000;font-weight:bold">'/example'</span>, <span style="color:#660099">type</span>=<span style="color:#008000;font-weight:bold">'http'</span>, <span style="color:#660099">auth</span>=<span style="color:#008000;font-weight:bold">'public'</span>, <span style="color:#660099">website</span>=<span style="color:#000080">True</span>)</div>
<div class="t mono" style="left:262px;width:21.8px;text-align:right;top:118.18px;font-size:7.5px;line-height:8px;color:#999;transform-origin:100% 50%;transform:scaleX(0.907)">7</div>
<div class="t mono code" style="left:308.2px;top:118.18px;font-size:7.5px;line-height:8px;color:#101010;transform-origin:0 50%;transform:scaleX(0.907)">    <span style="color:#000080;font-weight:bold">def</span> render_example_page(<span style="color:#94558d">self</span>):</div>
<div class="t mono" style="left:262px;width:21.8px;text-align:right;top:126.91px;font-size:7.5px;line-height:8px;color:#999;transform-origin:100% 50%;transform:scaleX(0.907)">8</div>
<div class="t mono code" style="left:308.2px;top:126.91px;font-size:7.5px;line-height:8px;color:#101010;transform-origin:0 50%;transform:scaleX(0.907)">        <span style="color:#000080;font-weight:bold">return</span> http.request.render(<span style="color:#008000;font-weight:bold">'create_webpage_demo.example_page'</span>, {})</div>
<div class="t mono" style="left:262px;width:21.8px;text-align:right;top:135.64px;font-size:7.5px;line-height:8px;color:#999;transform-origin:100% 50%;transform:scaleX(0.907)">9</div>
<div class="t mono code" style="left:308.2px;top:135.64px;font-size:7.5px;line-height:8px;color:#101010;transform-origin:0 50%;transform:scaleX(0.907)"></div>
<div class="t mono" style="left:262px;width:21.8px;text-align:right;top:144.37px;font-size:7.5px;line-height:8px;color:#999;transform-origin:100% 50%;transform:scaleX(0.907)">10</div>
<div class="t mono code" style="left:308.2px;top:144.37px;font-size:7.5px;line-height:8px;color:#101010;transform-origin:0 50%;transform:scaleX(0.907)">    <span style="color:#2f2fc8">@http.route</span>(<span style="color:#008000;font-weight:bold">'/example/detail'</span>, <span style="color:#660099">type</span>=<span style="color:#008000;font-weight:bold">'http'</span>, <span style="color:#660099">auth</span>=<span style="color:#008000;font-weight:bold">'public'</span>, <span style="color:#660099">website</span>=<span style="color:#000080">True</span>)</div>
<div class="t mono" style="left:262px;width:21.8px;text-align:right;top:153.10px;font-size:7.5px;line-height:8px;color:#999;transform-origin:100% 50%;transform:scaleX(0.907)">11</div>
<div class="t mono code" style="left:308.2px;top:153.10px;font-size:7.5px;line-height:8px;color:#101010;transform-origin:0 50%;transform:scaleX(0.907)">    <span style="color:#000080;font-weight:bold">def</span> navigate_to_detail_page(<span style="color:#94558d">self</span>):</div>
<div class="t mono" style="left:262px;width:21.8px;text-align:right;top:161.83px;font-size:7.5px;line-height:8px;color:#999;transform-origin:100% 50%;transform:scaleX(0.907)">12</div>
<div class="t mono code" style="left:308.2px;top:161.83px;font-size:7.5px;line-height:8px;color:#101010;transform-origin:0 50%;transform:scaleX(0.907)">        <span style="color:#727272;font-style:italic"># This will get all company details (in case of multicompany this are multiple records)</span></div>
<div class="t mono" style="left:262px;width:21.8px;text-align:right;top:170.56px;font-size:7.5px;line-height:8px;color:#999;transform-origin:100% 50%;transform:scaleX(0.907)">13</div>
<div class="t mono code" style="left:308.2px;top:170.56px;font-size:7.5px;line-height:8px;color:#101010;transform-origin:0 50%;transform:scaleX(0.907)">        companies = http.request.env[<span style="color:#008000;font-weight:bold">'res.company'</span>].sudo().search([])</div>
<div class="t mono" style="left:262px;width:21.8px;text-align:right;top:179.29px;font-size:7.5px;line-height:8px;color:#999;transform-origin:100% 50%;transform:scaleX(0.907)">14</div>
<div class="t mono code" style="left:308.2px;top:179.29px;font-size:7.5px;line-height:8px;color:#101010;transform-origin:0 50%;transform:scaleX(0.907)">        <span style="color:#000080;font-weight:bold">return</span> http.request.render<b>(</b><span style="color:#008000;font-weight:bold">'create_webpage_demo.detail_page'</span>, {</div>
<div class="t mono" style="left:262px;width:21.8px;text-align:right;top:188.02px;font-size:7.5px;line-height:8px;color:#999;transform-origin:100% 50%;transform:scaleX(0.907)">15</div>
<div class="t mono code" style="left:308.2px;top:188.02px;font-size:7.5px;line-height:8px;color:#101010;transform-origin:0 50%;transform:scaleX(0.907)">            <span style="color:#727272;font-style:italic"># pass company details to the webpage in a variable</span></div>
<div class="t mono" style="left:262px;width:21.8px;text-align:right;top:196.75px;font-size:7.5px;line-height:8px;color:#999;transform-origin:100% 50%;transform:scaleX(0.907)">16</div>
<div class="t mono code" style="left:308.2px;top:196.75px;font-size:7.5px;line-height:8px;color:#101010;transform-origin:0 50%;transform:scaleX(0.907)">            <span style="color:#008000;font-weight:bold">'companies'</span>: companies}<b>)</b></div>
<div class="a" style="left:332.69px;top:108.02px;width:28.57px;height:0.7px;background:repeating-linear-gradient(90deg,#b5b5b5 0 1px,transparent 1px 2px)"></div>
<div class="a" style="left:536.76px;top:169.13px;width:48.98px;height:0.7px;background:repeating-linear-gradient(90deg,#a6cfa6 0 1px,transparent 1px 2px)"></div>
<div class="a" style="left:479.62px;top:195.32px;width:28.57px;height:0.7px;background:repeating-linear-gradient(90deg,#a6cfa6 0 1px,transparent 1px 2px)"></div>
<svg class="a" style="left:301.6px;top:101.32px" width="6" height="6.2" viewBox="0 0 6 6.2"><path d="M0.4 0.4h4.8v3.2l-2.4 2.2l-2.4-2.2z" fill="#fff" stroke="#bdbdbd" stroke-width="0.6"/><path d="M1.6 2.4h2.4" stroke="#9a9a9a" stroke-width="0.5"/></svg>
<svg class="a" style="left:301.6px;top:118.78px" width="6" height="6.2" viewBox="0 0 6 6.2"><path d="M0.4 0.4h4.8v3.2l-2.4 2.2l-2.4-2.2z" fill="#fff" stroke="#bdbdbd" stroke-width="0.6"/><path d="M1.6 2.4h2.4" stroke="#9a9a9a" stroke-width="0.5"/></svg>
<svg class="a" style="left:301.6px;top:127.51px" width="6" height="6.2" viewBox="0 0 6 6.2"><path d="M0.4 5.8h4.8v-3.2l-2.4-2.2l-2.4 2.2z" fill="#fff" stroke="#bdbdbd" stroke-width="0.6"/><path d="M1.6 3.8h2.4" stroke="#9a9a9a" stroke-width="0.5"/></svg>
<svg class="a" style="left:301.6px;top:153.70px" width="6" height="6.2" viewBox="0 0 6 6.2"><path d="M0.4 0.4h4.8v3.2l-2.4 2.2l-2.4-2.2z" fill="#fff" stroke="#bdbdbd" stroke-width="0.6"/><path d="M1.6 2.4h2.4" stroke="#9a9a9a" stroke-width="0.5"/></svg>
<svg class="a" style="left:301.6px;top:179.89px" width="6" height="6.2" viewBox="0 0 6 6.2"><path d="M0.4 0.4h4.8v3.2l-2.4 2.2l-2.4-2.2z" fill="#fff" stroke="#bdbdbd" stroke-width="0.6"/><path d="M1.6 2.4h2.4" stroke="#9a9a9a" stroke-width="0.5"/></svg>
<svg class="a" style="left:301.6px;top:197.35px" width="6" height="6.2" viewBox="0 0 6 6.2"><path d="M0.4 5.8h4.8v-3.2l-2.4-2.2l-2.4 2.2z" fill="#fff" stroke="#bdbdbd" stroke-width="0.6"/><path d="M1.6 3.8h2.4" stroke="#9a9a9a" stroke-width="0.5"/></svg>
<div class="a" style="left:299.2px;top:178px;width:0.7px;height:26.8px;background:#6b8fc9"></div>
<div class="a" style="left:748.4px;top:66px;width:5.5px;height:5.6px;background:#d8d1a2"></div>
<div class="a" style="left:747px;top:108.8px;width:7.5px;height:0.8px;background:#cfc48a"></div>
<div class="a" style="left:747px;top:205.1px;width:7.5px;height:0.8px;background:#cfc48a"></div>
<div class="a" style="left:44.6px;top:382.4px;width:710.4px;height:0.7px;background:#c9c9c9"></div>
<div class="a" style="left:44.6px;top:383px;width:347.7px;height:13.5px;background:linear-gradient(#c6d0e2,#b6c0d3)"></div>
<div class="t" style="left:48px;top:385px;font-size:6.8px;color:#222;transform-origin:0 50%;transform:scaleX(0.95)">TODO:</div>
<div class="a" style="left:102px;top:383.6px;width:93px;height:12.6px;background:linear-gradient(#bcc6d8,#aeb8cb)"></div>
<div class="a" style="left:72px;top:383.6px;width:30px;height:12.6px;background:linear-gradient(#8a97ae,#7e8ba3)"></div>
<div class="t" style="left:77.3px;top:385px;font-size:6.8px;color:#f4f6fa">Project</div>
<div class="a" style="left:102px;top:383.6px;width:0.6px;height:12.6px;background:#8f9ab0"></div>
<div class="t" style="left:107px;top:385px;font-size:6.8px;color:#222">Current File</div>
<div class="a" style="left:146.6px;top:383.6px;width:0.6px;height:12.6px;background:#8f9ab0"></div>
<div class="t" style="left:151px;top:385px;font-size:6.8px;color:#222">Scope Based</div>
<div class="a" style="left:195px;top:383.6px;width:0.6px;height:12.6px;background:#8f9ab0"></div>
<svg class="a" style="left:364.3px;top:385.8px" width="8" height="8" viewBox="0 0 8 8"><g fill="#555"><rect x="3.3" y="0.2" width="1.4" height="7.6"/><rect x="0.2" y="3.3" width="7.6" height="1.4"/><rect x="3.3" y="0.2" width="1.4" height="7.6" transform="rotate(45 4 4)"/><rect x="3.3" y="0.2" width="1.4" height="7.6" transform="rotate(-45 4 4)"/><circle cx="4" cy="4" r="2.7"/></g><circle cx="4" cy="4" r="1.1" fill="#bec8da"/></svg>
<svg class="a" style="left:373.8px;top:388.8px" width="3.6" height="2.8" viewBox="0 0 3.6 2.8"><path d="M0 0.2H3.6L1.8 2.6z" fill="#555"/></svg>
<svg class="a" style="left:380px;top:385px" width="9" height="9" viewBox="0 0 9 9"><path d="M4.5 0.5v5" stroke="#555" stroke-width="0.7"/><path d="M3 4.3l1.5 1.5 1.5-1.5" stroke="#555" stroke-width="0.6" fill="none"/><path d="M1 7.5h7" stroke="#555" stroke-width="1.2"/></svg>
<div class="a" style="left:44.6px;top:396.5px;width:35.2px;height:46px;background:#e8e8e8;border-right:0.7px solid #d0d0d0"></div>
<svg class="a" style="left:50px;top:401.5px" width="6.2" height="7" viewBox="0 0 6.2 7"><path d="M3.1 0L6.2 3.3H4.2V7H2V3.3H0z" fill="#b3b3b3"/></svg>
<svg class="a" style="left:50px;top:415.6px" width="6.2" height="7" viewBox="0 0 6.2 7"><path d="M3.1 7L6.2 3.7H4.2V0H2V3.7H0z" fill="#3b8cd0"/></svg>
<svg class="a" style="left:66.3px;top:400.8px" width="7.2" height="8.2" viewBox="0 0 7.2 8.2"><path d="M0.3 0.4h6.6M0.3 7.8h6.6" stroke="#5a5a5a" stroke-width="0.8"/><path d="M3.6 1.3L5.3 3H1.9zM3.6 6.9L5.3 5.2H1.9z" fill="#3b8cd0"/><path d="M3.6 2.8v2.6" stroke="#3b8cd0" stroke-width="0.8"/></svg>
<svg class="a" style="left:66.3px;top:414.6px" width="7.2" height="9.6" viewBox="0 0 7.2 9.6"><path d="M0.3 3.9h6.6M0.3 5.7h6.6" stroke="#5a5a5a" stroke-width="0.8"/><path d="M3.6 3.3L5.5 0.8H1.7zM3.6 6.3L5.5 8.8H1.7z" fill="#3b8cd0"/></svg>
<svg class="a" style="left:51.0px;top:435.3px" width="5" height="4" viewBox="0 0 5 4"><path d="M0.4 0.4L2 2L0.4 3.6M2.6 0.4L4.2 2L2.6 3.6" fill="none" stroke="#8a8a8a" stroke-width="0.6"/></svg>
<svg class="a" style="left:67.8px;top:435.3px" width="5" height="4" viewBox="0 0 5 4"><path d="M0.4 0.4L2 2L0.4 3.6M2.6 0.4L4.2 2L2.6 3.6" fill="none" stroke="#8a8a8a" stroke-width="0.6"/></svg>
<div class="a" style="left:79.8px;top:396.5px;width:312.5px;height:46px;background:#fff"></div>
<div class="a" style="left:79.8px;top:396.8px;width:312.5px;height:10.8px;background:#0033cc"></div>
<svg class="a" style="left:81px;top:399.8px" width="6" height="5.2" viewBox="0 0 6 5.2"><path d="M0.3 0.3H5.5L2.9 4.9z" fill="#fff"/></svg>
<div class="t" style="left:92.2px;top:397.6px;font-size:8.5px;color:#fff;transform-origin:0 50%;transform:scaleX(0.943)">Found 898 TODO items in 383 files</div>
<div class="a tri d" style="left:93px;top:411.3px;border-left-width:2.5px;border-right-width:2.5px;border-top-width:4.5px;border-top-color:#9a9a9a"></div>
<svg class="a" style="left:103.2px;top:409.6px" width="8.2" height="6.6" viewBox="0 0 8.2 6.6"><path d="M0 0.2h3.3l0.6 1h4.3v5.3h-8.2z" fill="#9eaab4"/></svg>
<div class="t" style="left:114.2px;top:408.4px;font-size:8.5px;color:#222;transform-origin:0 50%;transform:scaleX(0.975)">odoo-10.0 <span style="color:#8a8a8a">(898 items in 383 files)</span></div>
<div class="a tri r" style="left:105px;top:422.2px;border-top-width:2.3px;border-bottom-width:2.3px;border-left-width:4.5px;border-left-color:#9a9a9a"></div>
<svg class="a" style="left:115.0px;top:420.6px" width="8.2" height="6.6" viewBox="0 0 8.2 6.6"><path d="M0 0.2h3.3l0.6 1h4.3v5.3h-8.2z" fill="#9eaab4"/></svg>
<div class="t" style="left:126.2px;top:419.4px;font-size:8.5px;color:#222;transform-origin:0 50%;transform:scaleX(0.96)">addons <span style="color:#8a8a8a">(608 items in 247 files)</span></div>
<div class="a tri r" style="left:105px;top:433.4px;border-top-width:2.3px;border-bottom-width:2.3px;border-left-width:4.5px;border-left-color:#9a9a9a"></div>
<svg class="a" style="left:115.0px;top:431.8px" width="8.2" height="6.6" viewBox="0 0 8.2 6.6"><path d="M0 0.2h3.3l0.6 1h4.3v5.3h-8.2z" fill="#9eaab4"/></svg>
<div class="t" style="left:126.2px;top:430.6px;font-size:8.5px;color:#222;transform-origin:0 50%;transform:scaleX(0.96)">build <span style="color:#8a8a8a">(133 items in 63 files)</span></div>
<div class="a" style="left:392.3px;top:383px;width:5px;height:59.5px;background:#e9e9e9;border-right:0.7px solid #d0d0d0"></div>
<svg class="a" style="left:393.6px;top:408px" width="2.4" height="9" viewBox="0 0 2.4 9"><path d="M0.6 0.5V8.5M1.8 0.5V8.5" stroke="#c8c8c8" stroke-width="0.5" stroke-dasharray="0.6 0.6"/></svg>
<div class="a" style="left:397.2px;top:383px;width:357.8px;height:13.5px;background:linear-gradient(#e9e9e9,#dadada)"></div>
<div class="t" style="left:400.7px;top:385px;font-size:6.9px;color:#3a3a3a;transform-origin:0 50%;transform:scaleX(0.96)">Event Log</div>
<svg class="a" style="left:727.0px;top:385.8px" width="8" height="8" viewBox="0 0 8 8"><g fill="#555"><rect x="3.3" y="0.2" width="1.4" height="7.6"/><rect x="0.2" y="3.3" width="7.6" height="1.4"/><rect x="3.3" y="0.2" width="1.4" height="7.6" transform="rotate(45 4 4)"/><rect x="3.3" y="0.2" width="1.4" height="7.6" transform="rotate(-45 4 4)"/><circle cx="4" cy="4" r="2.7"/></g><circle cx="4" cy="4" r="1.1" fill="#e0e0e0"/></svg>
<svg class="a" style="left:736.8px;top:388.8px" width="3.6" height="2.8" viewBox="0 0 3.6 2.8"><path d="M0 0.2H3.6L1.8 2.6z" fill="#555"/></svg>
<svg class="a" style="left:743px;top:385px" width="9" height="9" viewBox="0 0 9 9"><path d="M4.5 0.5v5" stroke="#555" stroke-width="0.7"/><path d="M3 4.3l1.5 1.5 1.5-1.5" stroke="#555" stroke-width="0.6" fill="none"/><path d="M1 7.5h7" stroke="#555" stroke-width="1.2"/></svg>
<div class="a" style="left:397.2px;top:396.5px;width:17.3px;height:46px;background:#e8e8e8;border-right:0.6px solid #d3d3d3"></div>
<svg class="a" style="left:400.5px;top:399.5px" width="9" height="9" viewBox="0 0 9 9"><path d="M2 8L7 2" stroke="#666" stroke-width="1.2"/><circle cx="3" cy="3" r="2.2" fill="#e8a238"/><circle cx="3" cy="3" r="0.8" fill="#fff"/><path d="M6 6.5l2 1" stroke="#666" stroke-width="1"/></svg>
<div class="a" style="left:399.3px;top:412.8px;width:13px;height:13.2px;background:#d2d2d2;border-radius:1.5px"></div>
<svg class="a" style="left:401.3px;top:414.8px" width="9" height="9" viewBox="0 0 9 9"><path d="M0.8 0.8h7.4v5.4h-4l-2 2v-2h-1.4z" fill="#bfe0f7" stroke="#3b8fd6" stroke-width="0.8"/><path d="M2.3 2.6h4.4M2.3 4.2h3.2" stroke="#3b8fd6" stroke-width="0.5"/></svg>
<svg class="a" style="left:403.5px;top:435.3px" width="5" height="4" viewBox="0 0 5 4"><path d="M0.4 0.4L2 2L0.4 3.6M2.6 0.4L4.2 2L2.6 3.6" fill="none" stroke="#8a8a8a" stroke-width="0.6"/></svg>
<div class="a" style="left:414.6px;top:396.5px;width:340.4px;height:46px;background:#fff"></div>
<div class="a" style="left:32px;top:442.5px;width:723.5px;height:13.8px;background:#e8e8e8;border-top:0.6px solid #cdcdcd"></div>
<div class="a" style="left:44.8px;top:443.4px;width:47px;height:12.5px;background:#b7b7b7"></div>
<svg class="a" style="left:50.5px;top:444.5px" width="9" height="10" viewBox="0 0 9 10"><circle cx="5" cy="6" r="3" fill="#e8a238"/><rect x="2.5" y="8.6" width="5" height="1.2" fill="#3b8fd6"/><path d="M1 2.5l1.2 1.3L4.5 1" stroke="#fff" stroke-width="1" fill="none"/><path d="M3.5 3.5h4v1.5h-4z" fill="#444"/></svg>
<div class="t" style="left:61.2px;top:444.8px;font-size:6.9px;color:#262626;transform-origin:0 50%;transform:scaleX(0.92)"><u>6</u>: TODO</div>
<svg class="a" style="left:99px;top:445px" width="9" height="9" viewBox="0 0 9 9"><path d="M3.2 0.5h2.6a1.2 1.2 0 0 1 1.2 1.2v2.3a1.2 1.2 0 0 1-1.2 1.2h-2.6a1.2 1.2 0 0 0-1.2 1.2v1H1.3a1 1 0 0 1-1-1v-2.4a1.2 1.2 0 0 1 1.2-1.2h3.3v-0.5h-2.8v-0.6a1.2 1.2 0 0 1 1.2-1.2z" fill="#3c78b4"/><path d="M5.8 8.5h-2.6a1.2 1.2 0 0 1-1.2-1.2v-1.3a1.2 1.2 0 0 1 1.2-1.2h2.6a1.2 1.2 0 0 0 1.2-1.2v-1h0.7a1 1 0 0 1 1 1v2.4a1.2 1.2 0 0 1-1.2 1.2h-2.3v0.5h2.6v0.6a1.2 1.2 0 0 1-1.2 1.2z" fill="#f6c83a"/></svg>
<div class="t" style="left:110px;top:444.8px;font-size:6.8px;color:#262626;transform-origin:0 50%;transform:scaleX(0.96)">Python Console</div>
<svg class="a" style="left:168.8px;top:445.6px" width="8" height="8" viewBox="0 0 8 8"><rect x="0" y="0" width="8" height="8" fill="#5c5c5c"/><rect x="0.9" y="2" width="6.2" height="5.1" fill="#a8a8a8"/><path d="M1.8 3.8l1.3 0.9-1.3 0.9M3.6 6h2.6" stroke="#333" stroke-width="0.6" fill="none"/></svg>
<div class="t" style="left:179px;top:444.8px;font-size:6.8px;color:#262626">Terminal</div>
<div class="a" style="left:701px;top:443.4px;width:54px;height:12.5px;background:#b7b7b7"></div>
<svg class="a" style="left:707px;top:445px" width="10" height="9" viewBox="0 0 10 9"><path d="M5 0.8c2.3 0 4.2 1.4 4.2 3.2S7.3 7.2 5 7.2c-0.6 0-1.2-0.1-1.7-0.3L1 8.2l0.8-1.8C1.1 5.8 0.8 5 0.8 4 0.8 2.2 2.7 0.8 5 0.8z" fill="none" stroke="#666" stroke-width="0.7"/></svg>
<div class="t" style="left:719.5px;top:444.8px;font-size:6.8px;color:#262626">Event Log</div>
<div class="a" style="left:32px;top:456.3px;width:736px;height:11.7px;background:#e9e9e9;border-top:0.6px solid #d2d2d2"></div>
<div class="a" style="left:35.6px;top:458.2px;width:8.2px;height:8.2px;background:linear-gradient(#bdbdbd,#b0b0b0);border:0.6px solid #a0a0a0;border-bottom-width:1px;border-radius:1px"></div>
<div class="t" style="left:50.5px;top:457.6px;font-size:6.8px;color:#262626">PEP 8: no newline at end of file</div>
<div class="t" style="left:672px;top:457.6px;font-size:6.8px;color:#262626">16:37</div>
<div class="t" style="left:694.5px;top:457.6px;font-size:7px;color:#222">LF</div>
<svg class="a" style="left:703px;top:459px" width="4" height="7" viewBox="0 0 4 7"><path d="M0.3 2.8L2 0.6L3.7 2.8zM0.3 4.2L2 6.4L3.7 4.2z" fill="#444"/></svg>
<div class="t" style="left:713.5px;top:457.6px;font-size:6.8px;color:#9a9a9a">UTF-8</div>
<svg class="a" style="left:742.5px;top:459.3px" width="7" height="7" viewBox="0 0 7 7"><rect x="2.6" y="3.2" width="3.6" height="3" fill="none" stroke="#444" stroke-width="0.8"/><path d="M0.8 3.2V1.9a1.1 1.1 0 0 1 2.2 0v1.3" stroke="#444" stroke-width="0.7" fill="none"/></svg>
<svg class="a" style="left:753.5px;top:457.8px" width="9" height="9" viewBox="0 0 9 9"><circle cx="4.5" cy="3.5" r="2.8" fill="none" stroke="#555" stroke-width="0.8"/><path d="M2 6.5v2h5v-2" stroke="#555" stroke-width="0.8" fill="none"/><circle cx="3.4" cy="3.3" r="0.5" fill="#555"/><circle cx="5.6" cy="3.3" r="0.5" fill="#555"/></svg>
<div class="a" style="left:32px;top:18px;width:1px;height:451px;background:#a0a0a0"></div>
<div class="a" style="left:767px;top:18px;width:1px;height:451px;background:#8c8c8c"></div>
<div class="a" style="left:32px;top:468px;width:736px;height:1px;background:#808080"></div>
<div class="a" style="left:33px;top:467px;width:734px;height:1px;background:#ededed"></div>
</div></body></html>
